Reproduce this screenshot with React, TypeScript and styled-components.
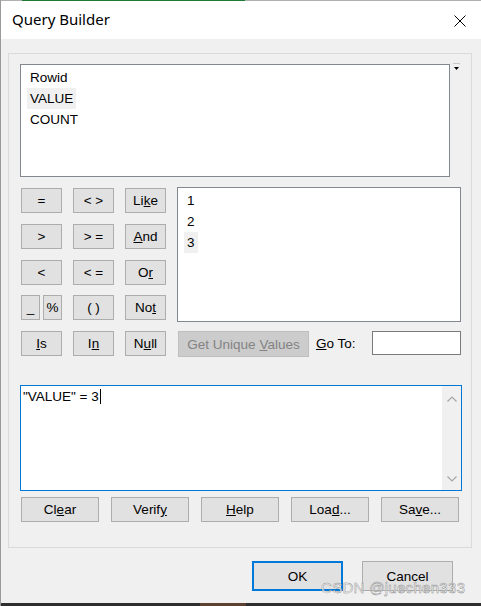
import * as React from 'react'
import styled, { createGlobalStyle, css } from 'styled-components'

const GlobalStyle = createGlobalStyle`
  html, body {
    margin: 0;
    padding: 0;
    background: #ffffff;
  }
  body {
    font-family: "Liberation Sans", Arial, sans-serif;
    font-size: 13.5px;
    color: #000;
  }
`

const Window = styled.div`
  position: relative;
  width: 481px;
  height: 606px;
  box-sizing: border-box;
  display: flex;
  flex-direction: column;
  background: #f0f0f0;
  border-left: 1px solid #9a9a9a;
  overflow: hidden;
`
const TopEdge = styled.div`
  display: flex;
  height: 1px;
  background: #b0b0b0;
`
const GreenSeg = styled.div`
  margin-left: 21px;
  width: 223px;
  background: #1f7a33;
`
const TitleBar = styled.div`
  display: flex;
  justify-content: space-between;
  align-items: flex-start;
  height: 38px;
  box-sizing: border-box;
  padding: 8px 15px 0 11px;
  background: #ffffff;
`
const Title = styled.span`
  font-family: "Noto Sans", "Open Sans", sans-serif;
  font-size: 15px;
  color: #000;
`
const CloseIcon = styled.svg`
  margin-top: 6px;
`
const Frame = styled.div`
  width: 464px;
  box-sizing: border-box;
  margin: 14px 0 0 7px;
  padding: 10px 0 25px 11px;
  border: 1px solid #dadada;
`
const FieldRow = styled.div`
  display: flex;
  gap: 3px;
  align-items: flex-start;
`
const ListBox = styled.div<{ $w: number; $h: number; $pl: number }>`
  width: ${({ $w }) => $w}px;
  height: ${({ $h }) => $h}px;
  box-sizing: border-box;
  padding: 2px 0 0 ${({ $pl }) => $pl}px;
  background: #ffffff;
  border: 1px solid #828790;
`
const ListItem = styled.div`
  height: 21px;
  display: flex;
  align-items: center;
`
const ItemText = styled.span<{ $selected?: boolean }>`
  padding: 0 3px;
  line-height: 21px;
  background: ${({ $selected }) => ($selected ? '#f0f0f0' : 'transparent')};
`
const ScrollHint = styled.svg`
  margin-top: -1px;
`
const MiddleRow = styled.div`
  display: flex;
  gap: 11px;
  margin-top: 10px;
`
const OperatorGrid = styled.div`
  display: grid;
  grid-template-columns: 41px 41px 41px;
  grid-template-rows: repeat(5, 25px);
  column-gap: 11px;
  row-gap: 10.75px;
  margin: 1px 0 0 1px;
`
const SmallPair = styled.div`
  display: flex;
  gap: 3px;
`
const RightCol = styled.div`
  display: flex;
  flex-direction: column;
  width: 284px;
`
const UniqueRow = styled.div`
  display: flex;
  align-items: flex-start;
  margin-top: 9px;
  padding-left: 1px;
`
const Btn = styled.button<{ $w?: number; $h?: number; $disabled?: boolean; $default?: boolean }>`
  width: ${({ $w }) => ($w ? `${$w}px` : '100%')};
  height: ${({ $h }) => ($h ? `${$h}px` : '100%')};
  box-sizing: border-box;
  margin: 0;
  padding: 0;
  font: inherit;
  color: #000;
  background: #e1e1e1;
  border: 1px solid #adadad;
  border-radius: 0;
  display: flex;
  align-items: center;
  justify-content: center;
  white-space: nowrap;
  ${({ $disabled }) =>
    $disabled &&
    css`
      background: #cccccc;
      border-color: #bfbfbf;
      color: #838383;
    `}
  ${({ $default }) =>
    $default &&
    css`
      border: 2px solid #0078d7;
    `}
`
const BtnLabel = styled.span`
  white-space: pre;
`
const GoToLabel = styled.span`
  width: 56px;
  margin-left: 7px;
  line-height: 26px;
`
const GoToInput = styled.div`
  width: 89px;
  height: 24px;
  box-sizing: border-box;
  background: #ffffff;
  border: 1px solid #7a7a7a;
`
const ExprBox = styled.div`
  display: flex;
  width: 442px;
  height: 106px;
  box-sizing: border-box;
  margin-top: 28px;
  background: #ffffff;
  border: 1px solid #0078d7;
`
const ExprText = styled.div`
  flex: 1;
  padding: 3px 2px;
`
const Caret = styled.span`
  display: inline-block;
  width: 1px;
  height: 15px;
  margin-left: 1px;
  vertical-align: -3px;
  background: #000;
`
const ScrollBar = styled.div`
  width: 19px;
  display: flex;
  flex-direction: column;
  justify-content: space-between;
  align-items: center;
  padding: 10px 0 8px;
  background: #f0f0f0;
`
const ButtonRow = styled.div`
  display: flex;
  gap: 12px;
  margin: 6px 0 0 1px;
`
const DialogButtons = styled.div`
  display: flex;
  justify-content: flex-end;
  gap: 19px;
  margin-top: 13px;
  padding-right: 28px;
`
const BottomEdge = styled.div`
  display: flex;
  margin-top: auto;
  height: 3px;
  background: #2e2e2e;
`
const BrownSeg = styled.div`
  margin-left: 199px;
  width: 46px;
  background: #5c4030;
`
const Watermark = styled.div`
  position: absolute;
  left: 320px;
  top: 579px;
  font-size: 15px;
  color: rgba(250, 250, 250, 0.85);
  -webkit-text-stroke: 0.45px #8a8a8a;
  letter-spacing: 0.3px;
  white-space: nowrap;
`

const operators: { key: string; label: React.ReactNode }[] = [
  { key: 'eq', label: '=' },
  { key: 'ne', label: '< >' },
  { key: 'like', label: <>Li<u>k</u>e</> },
  { key: 'gt', label: '>' },
  { key: 'ge', label: '> =' },
  { key: 'and', label: <><u>A</u>nd</> },
  { key: 'lt', label: '<' },
  { key: 'le', label: '< =' },
  { key: 'or', label: <>O<u>r</u></> },
  { key: 'wild', label: null },
  { key: 'paren', label: '( )' },
  { key: 'not', label: <>No<u>t</u></> },
  { key: 'is', label: <><u>I</u>s</> },
  { key: 'in', label: <>I<u>n</u></> },
  { key: 'null', label: <>N<u>u</u>ll</> }
]

const fields = ['Rowid', 'VALUE', 'COUNT']
const values = ['1', '2', '3']

const actions: React.ReactNode[] = [
  <>Cl<u>e</u>ar</>,
  <>Verif<u>y</u></>,
  <><u>H</u>elp</>,
  <>Loa<u>d</u>...</>,
  <>Sa<u>v</u>e...</>
]

const Chevron = ({ up }: { up?: boolean }) => (
  <svg width="10" height="6" viewBox="0 0 10 6">
    <path
      d={up ? 'M0.5 5.5 L5 1 L9.5 5.5' : 'M0.5 0.5 L5 5 L9.5 0.5'}
      fill="none"
      stroke="#a6a6a6"
      strokeWidth="1.2"
    />
  </svg>
)

export default function App() {
  return (
    <>
      <GlobalStyle />
      <Window>
        <TopEdge>
          <GreenSeg />
        </TopEdge>
        <TitleBar>
          <Title>Query Builder</Title>
          <CloseIcon width="12" height="12" viewBox="0 0 12 12">
            <path d="M0.5 0.5 L11.5 11.5 M11.5 0.5 L0.5 11.5" stroke="#000" strokeWidth="1" />
          </CloseIcon>
        </TitleBar>

        <Frame>
          <FieldRow>
            <ListBox $w={430} $h={113} $pl={6}>
              {fields.map(f => (
                <ListItem key={f}>
                  <ItemText $selected={f === 'VALUE'}>{f}</ItemText>
                </ListItem>
              ))}
            </ListBox>
            <ScrollHint width="7" height="9" viewBox="0 0 7 9">
              <rect x="0" y="0" width="7" height="1" fill="#c8c8c8" />
              <path d="M1 4 L6 4 L3.5 7 Z" fill="#000" />
            </ScrollHint>
          </FieldRow>

          <MiddleRow>
            <OperatorGrid>
              {operators.map(op =>
                op.key === 'wild' ? (
                  <SmallPair key={op.key}>
                    <Btn $w={19} $h={25}>_</Btn>
                    <Btn $w={19} $h={25}>%</Btn>
                  </SmallPair>
                ) : (
                  <Btn key={op.key}>
                    <BtnLabel>{op.label}</BtnLabel>
                  </Btn>
                )
              )}
            </OperatorGrid>
            <RightCol>
              <ListBox $w={284} $h={135} $pl={6}>
                {values.map(v => (
                  <ListItem key={v}>
                    <ItemText $selected={v === '3'}>{v}</ItemText>
                  </ListItem>
                ))}
              </ListBox>
              <UniqueRow>
                <Btn $w={131} $h={26} $disabled>
                  <BtnLabel>
                    Get Unique <u>V</u>alues
                  </BtnLabel>
                </Btn>
                <GoToLabel>
                  <u>G</u>o To:
                </GoToLabel>
                <GoToInput />
              </UniqueRow>
            </RightCol>
          </MiddleRow>

          <ExprBox>
            <ExprText>
              "VALUE" = 3<Caret />
            </ExprText>
            <ScrollBar>
              <Chevron up />
              <Chevron />
            </ScrollBar>
          </ExprBox>

          <ButtonRow>
            {actions.map((a, i) => (
              <Btn key={i} $w={78} $h={25}>
                <BtnLabel>{a}</BtnLabel>
              </Btn>
            ))}
          </ButtonRow>
        </Frame>

        <DialogButtons>
          <Btn $w={91} $h={30} $default>OK</Btn>
          <Btn $w={91} $h={30}>Cancel</Btn>
        </DialogButtons>

        <BottomEdge>
          <BrownSeg />
        </BottomEdge>
        <Watermark>CSDN @juechen333</Watermark>
      </Window>
    </>
  )
}
